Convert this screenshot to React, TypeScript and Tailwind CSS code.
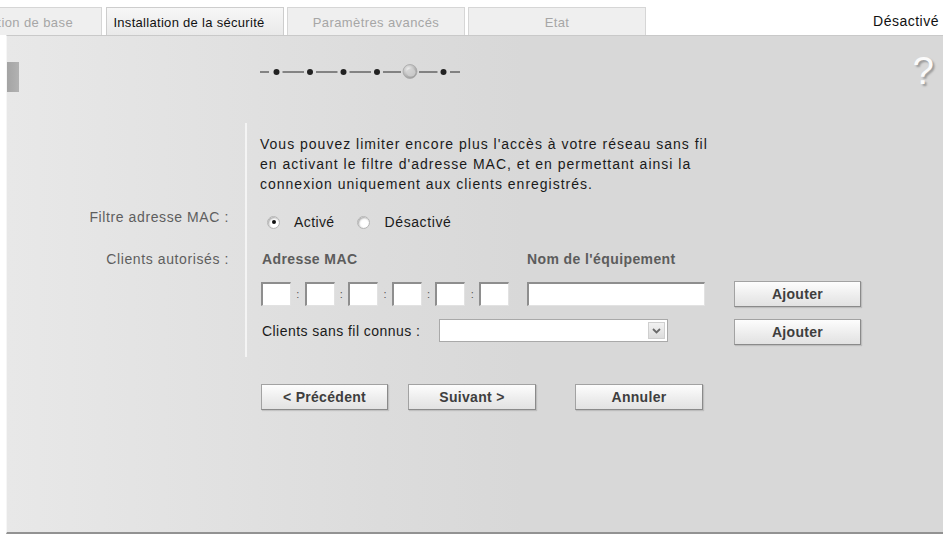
import React from "react";

const F = "font-['Liberation_Sans',Arial,sans-serif]";

function Radio({ checked }: { checked?: boolean }) {
  return (
    <span className="w-[13px] h-[13px] rounded-full bg-white border border-[#b4b4b4] shadow-[inset_1px_1px_2px_rgba(0,0,0,0.35)] flex items-center justify-center">
      {checked && <span className="w-[4px] h-[4px] rounded-full bg-[#111]" />}
    </span>
  );
}

function TextBox({ w }: { w: string }) {
  return (
    <div
      className={`${w} h-[24px] bg-white border-t-2 border-l-2 border-t-[#8e8e8e] border-l-[#8e8e8e] border-r border-b border-r-[#e2e2e2] border-b-[#e2e2e2]`}
    />
  );
}

function Btn({ children, w = "w-[127px]" }: { children: React.ReactNode; w?: string }) {
  return (
    <div
      className={`${w} h-[26px] flex items-center justify-center border border-[#a2a2a2] border-b-[#8a8a8a] border-r-[#8a8a8a] bg-[linear-gradient(to_bottom,#fdfdfd,#ececec_60%,#e2e2e2)] shadow-[1px_1px_1px_rgba(0,0,0,0.12)] text-[14px] font-bold tracking-[0.3px] text-[#3e3e3e]`}
    >
      {children}
    </div>
  );
}

function Progress() {
  const dots = [21.5, 55, 88.5, 122, 188.5];
  const ring = 155;
  const cy = 8;
  const all = [21.5, 55, 88.5, 122, 155, 188.5];
  const segs: [number, number][] = [[5, 14]];
  for (let i = 0; i < all.length - 1; i++) {
    const a = all[i] + (all[i] === ring ? 9 : 6);
    const b = all[i + 1] - (all[i + 1] === ring ? 9 : 6);
    segs.push([a, b]);
  }
  segs.push([195, 205]);
  return (
    <svg width="210" height="18" viewBox="0 0 210 18" className="block">
      <defs>
        <radialGradient id="bead" cx="40%" cy="35%" r="65%">
          <stop offset="0%" stopColor="#f2f2f2" />
          <stop offset="55%" stopColor="#c4c4c4" />
          <stop offset="100%" stopColor="#9c9c9c" />
        </radialGradient>
      </defs>
      {segs.map(([a, b], i) => (
        <line key={i} x1={a} y1={cy} x2={b} y2={cy} stroke="#3a3a3a" strokeWidth="1.1" />
      ))}
      {dots.map((x, i) => (
        <circle key={i} cx={x} cy={cy} r="3" fill="#222" />
      ))}
      <circle cx={ring} cy={cy - 0.5} r="7" fill="url(#bead)" stroke="#a8a8a8" strokeWidth="0.8" />
      <ellipse cx={ring + 1} cy={cy + 0.5} rx="4.5" ry="4" fill="#cfcfcf" opacity="0.8" />
    </svg>
  );
}

export default function App() {
  return (
    <div className={`w-[943px] h-[534px] bg-white flex flex-col overflow-hidden ${F} text-[14px]`}>
      {/* Tabs */}
      <div className="h-[35px] flex items-start pt-[7px] overflow-hidden shrink-0">
        <div className="-ml-[76px] w-[178px] h-[28px] shrink-0 flex items-center justify-center pt-[3px] bg-[#efefef] border border-b-0 border-[#d6d6d6] text-[13px] tracking-[0.4px] text-[#a6a6a6] whitespace-nowrap">
          Installation de base
        </div>
        <div className="ml-[4px] w-[178px] h-[29px] shrink-0 relative z-10 flex items-center justify-center pt-[2px] pb-[1px] pr-[12px] bg-[linear-gradient(to_bottom,#f7f7f7,#e9e9e9)] border border-b-0 border-[#cdcdcd] text-[13px] tracking-[0.3px] text-[#111] whitespace-nowrap">
          Installation de la sécurité
        </div>
        <div className="ml-[3px] w-[178px] h-[28px] shrink-0 flex items-center justify-center pt-[3px] bg-[#efefef] border border-b-0 border-[#d6d6d6] text-[13px] tracking-[0.4px] text-[#a6a6a6] whitespace-nowrap">
          Paramètres avancés
        </div>
        <div className="ml-[3px] w-[178px] h-[28px] shrink-0 flex items-center justify-center pt-[3px] bg-[#efefef] border border-b-0 border-[#d6d6d6] text-[13px] tracking-[0.4px] text-[#a6a6a6]">
          Etat
        </div>
        <div className="ml-auto mr-[4px] mt-[4px] text-[14px] tracking-[0.5px] text-[#111]">Désactivé</div>
      </div>

      {/* Content */}
      <div className="flex-1 ml-[6px] flex flex-col border-t border-t-[#c9c9c9] border-l border-l-[#f6f6f6] border-b-2 border-b-[#929292] bg-[linear-gradient(to_right,#e8e8e8,#dcdcdc_40%,#d8d8d8_55%,#d8d8d8)]">
        {/* Header row */}
        <div className="h-[87px] flex items-start shrink-0">
          <div className="w-[12px] h-[30px] mt-[26px] bg-[linear-gradient(to_right,#a4a4a4,#b2b2b2)]" />
          <div className="ml-[236px] mt-[28px]">
            <Progress />
          </div>
          <div className="ml-auto mr-[9px] mt-[16px] text-[38px] leading-[38px] text-[#fbfbfb] [text-shadow:2px_2px_2px_#9a9a9a]">
            ?
          </div>
        </div>

        {/* Form */}
        <div className="flex flex-col">
          {/* Row A */}
          <div className="flex h-[80px]">
            <div className="w-[238px] shrink-0" />
            <div className="flex-1 border-l-2 border-l-[#f4f4f4] pl-[13px] pt-[11px] text-[14px] leading-[20px] tracking-[1px] text-[#1a1a1a] whitespace-nowrap">
              Vous pouvez limiter encore plus l'accès à votre réseau sans fil
              <br />
              en activant le filtre d'adresse MAC, et en permettant ainsi la
              <br />
              connexion uniquement aux clients enregistrés.
            </div>
          </div>
          {/* Row B */}
          <div className="flex h-[38px]">
            <div className="w-[238px] shrink-0 text-right pr-[16px] pt-[6px] leading-[17px] tracking-[0.6px] text-[#5e5e5e]">
              Filtre adresse MAC :
            </div>
            <div className="flex-1 border-l-2 border-l-[#f4f4f4] pl-[13px] flex items-center text-[#1a1a1a] tracking-[0.4px]">
              <span className="ml-[7px]">
                <Radio checked />
              </span>
              <span className="ml-[14px]">Activé</span>
              <span className="ml-[22px]">
                <Radio />
              </span>
              <span className="ml-[15px] tracking-[0.6px]">Désactivé</span>
            </div>
          </div>
          {/* Row C */}
          <div className="flex h-[78px]">
            <div className="w-[238px] shrink-0 text-right pr-[16px] pt-[10px] leading-[17px] tracking-[0.6px] text-[#5e5e5e]">
              Clients autorisés :
            </div>
            <div className="flex-1 border-l-2 border-l-[#f4f4f4] pl-[13px] pt-[10px] flex flex-col">
              <div className="flex leading-[17px] font-bold tracking-[0.4px] text-[#5c5c5c]">
                <span className="w-[267px] pl-[2px]">Adresse MAC</span>
                <span>Nom de l'équipement</span>
              </div>
              <div className="flex items-center mt-[13px] ml-[1px]">
                <TextBox w="w-[30px]" />
                <span className="w-[13.6px] text-center text-[11px] text-[#555]">:</span>
                <TextBox w="w-[30px]" />
                <span className="w-[13.6px] text-center text-[11px] text-[#555]">:</span>
                <TextBox w="w-[30px]" />
                <span className="w-[13.6px] text-center text-[11px] text-[#555]">:</span>
                <TextBox w="w-[30px]" />
                <span className="w-[13.6px] text-center text-[11px] text-[#555]">:</span>
                <TextBox w="w-[30px]" />
                <span className="w-[13.6px] text-center text-[11px] text-[#555]">:</span>
                <TextBox w="w-[30px]" />
                <div className="ml-[18px]">
                  <TextBox w="w-[178px]" />
                </div>
                <div className="ml-[29px]">
                  <Btn>Ajouter</Btn>
                </div>
              </div>
            </div>
          </div>
          {/* Row D */}
          <div className="flex h-[38px]">
            <div className="w-[238px] shrink-0" />
            <div className="flex-1 border-l-2 border-l-[#f4f4f4] pl-[13px] flex items-start">
              <span className="w-[179px] pl-[2px] mt-[4px] leading-[17px] tracking-[0.45px] text-[#1a1a1a] whitespace-nowrap">
                Clients sans fil connus :
              </span>
              <div className="w-[229px] h-[23px] bg-white border border-[#a9a9a9] flex justify-end items-stretch p-[2px]">
                <div className="w-[17px] bg-[linear-gradient(to_bottom,#f2f2f2,#dcdcdc)] border border-[#cfcfcf] flex items-center justify-center">
                  <svg width="9" height="6" viewBox="0 0 9 6">
                    <path d="M1 1 L4.5 4.5 L8 1" fill="none" stroke="#6a6a6a" strokeWidth="1.8" />
                  </svg>
                </div>
              </div>
              <div className="ml-[66px]">
                <Btn>Ajouter</Btn>
              </div>
            </div>
          </div>
        </div>

        {/* Buttons */}
        <div className="flex mt-[27px] ml-[254px]">
          <Btn>&lt; Précédent</Btn>
          <div className="ml-[20px]">
            <Btn w="w-[128px]">Suivant &gt;</Btn>
          </div>
          <div className="ml-[39px]">
            <Btn w="w-[128px]">Annuler</Btn>
          </div>
        </div>
      </div>
    </div>
  );
}
